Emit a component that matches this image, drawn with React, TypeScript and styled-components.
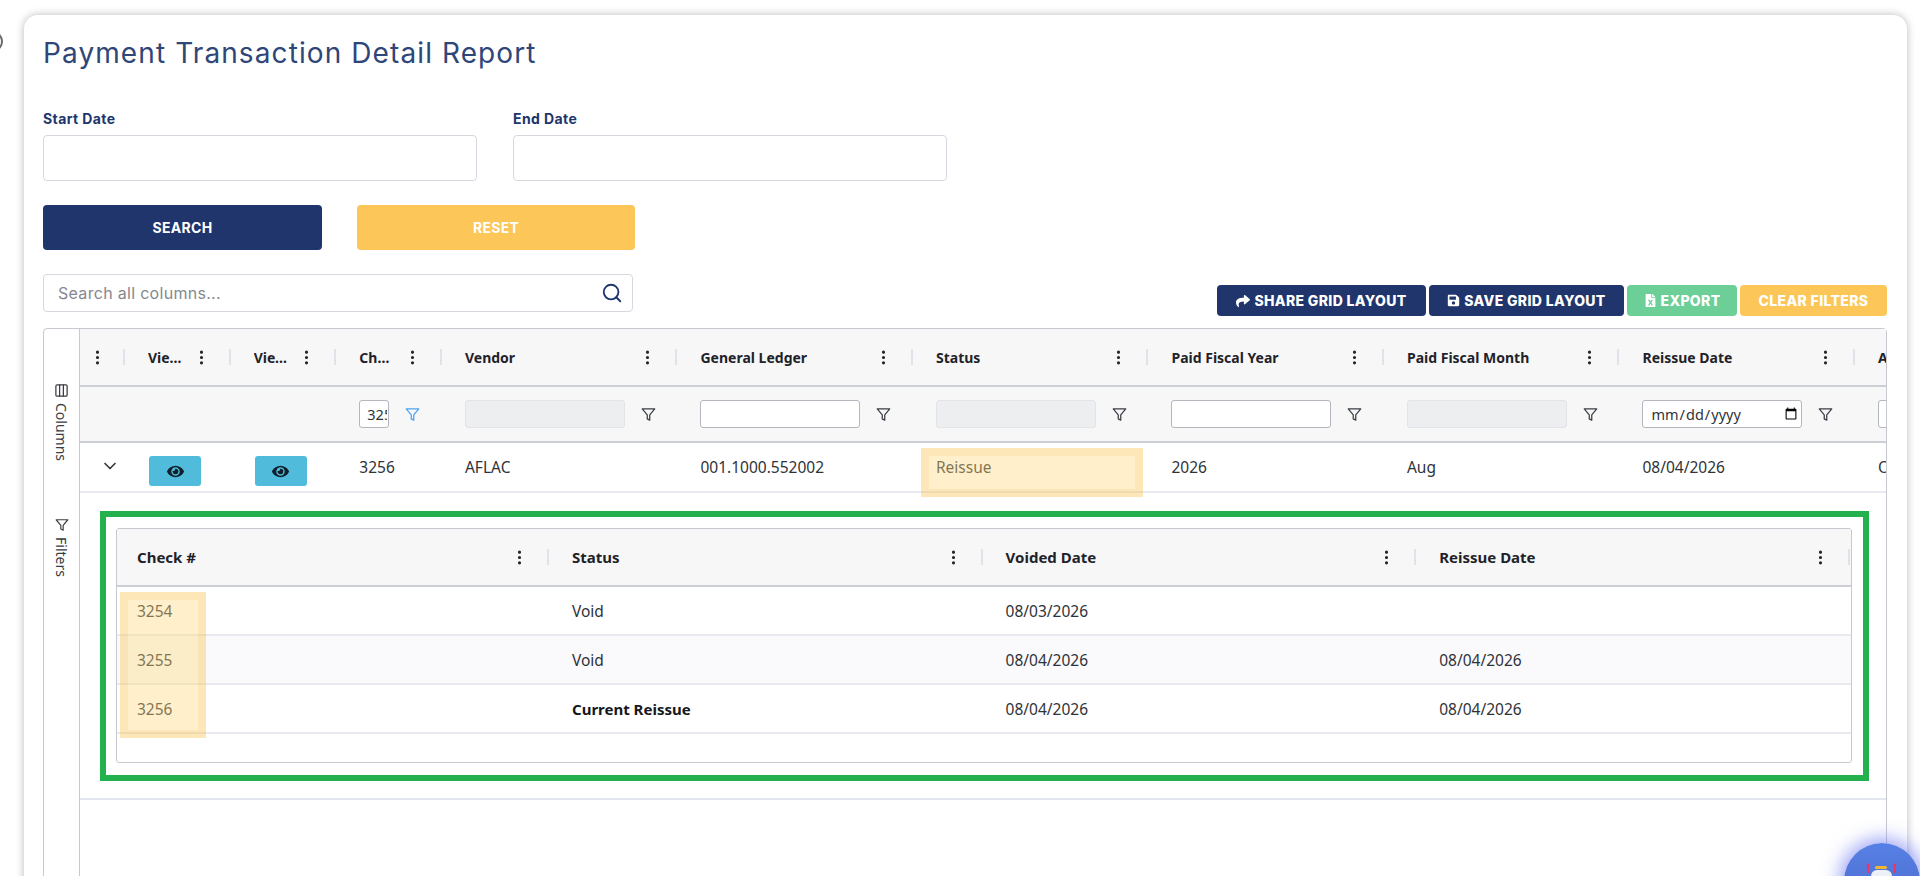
import React from "react";
import styled, { createGlobalStyle } from "styled-components";
import { BsThreeDotsVertical } from "react-icons/bs";
import { FaEye, FaFileExcel, FaSave, FaShare } from "react-icons/fa";
import { FiChevronDown, FiFilter, FiSearch } from "react-icons/fi";
import { Columns3 } from "lucide-react";

const Global = createGlobalStyle`
  html, body { margin: 0; padding: 0; height: 876px; overflow: hidden; background: #fff; }
  * { box-sizing: border-box; }
`;

const navy = "#20356b";
const yellow = "#fcc659";
const uiFont = `"Inter", "Liberation Sans", sans-serif`;
const gridFont = `"Noto Sans", "Open Sans", sans-serif`;

const Page = styled.div`
  position: relative;
  height: 876px;
  overflow: hidden;
  padding: 15px 13px 0 24px;
`;
const EdgeMark = styled.div`
  position: absolute;
  left: -14px;
  top: 32px;
  width: 17px;
  height: 19px;
  border-radius: 50%;
  border: 2px solid #6a6a6a;
`;
const Card = styled.main`
  height: 1000px;
  background: #fff;
  border-radius: 14px;
  box-shadow: 0 0 8px rgba(0, 0, 0, 0.28);
  padding: 21px 20px 0 19px;
`;
const Title = styled.h1`
  margin: 0 0 40px;
  font: 400 28px/34px ${uiFont};
  color: #2f4679;
  letter-spacing: 1.1px;
`;
const DateRow = styled.div`
  display: grid;
  grid-template-columns: 434px 434px;
  column-gap: 36px;
`;
const Field = styled.label`
  display: flex;
  flex-direction: column;
  gap: 7px;
`;
const FieldLabel = styled.span`
  font: 700 14px/18px ${uiFont};
  letter-spacing: 0.4px;
  color: ${navy};
`;
const TextBox = styled.input`
  height: 46px;
  border: 1px solid #d5d8de;
  border-radius: 4px;
  background: #fff;
`;
const Actions = styled.div`
  display: flex;
  gap: 35px;
  margin: 24px 0;
`;
const ActionButton = styled.button<{ $bg: string; $w: number }>`
  width: ${(p) => p.$w}px;
  height: 45px;
  border: 0;
  border-radius: 4px;
  background: ${(p) => p.$bg};
  color: #fff;
  font: 700 14px ${uiFont};
  letter-spacing: 0.3px;
`;
const ToolRow = styled.div`
  display: flex;
  justify-content: space-between;
  align-items: flex-end;
  height: 42px;
  margin-bottom: 12px;
`;
const SearchWrap = styled.div`
  align-self: flex-start;
  width: 590px;
  height: 38px;
  display: flex;
  align-items: center;
  justify-content: space-between;
  padding: 0 9px 0 14px;
  border: 1px solid #d5d8de;
  border-radius: 4px;
  font: 400 16px ${uiFont};
  letter-spacing: 0.3px;
  color: #85888f;
  svg { color: ${navy}; }
`;
const Toolbar = styled.div`
  display: flex;
  gap: 3px;
`;
const ToolButton = styled.button<{ $bg: string; $w: number }>`
  width: ${(p) => p.$w}px;
  height: 31px;
  display: flex;
  align-items: center;
  justify-content: center;
  gap: 4px;
  padding: 0;
  border: 0;
  border-radius: 4px;
  background: ${(p) => p.$bg};
  color: #fff;
  font: 800 14px ${uiFont};
  letter-spacing: 0.35px;
`;
const Grid = styled.section`
  display: flex;
  height: 800px;
  border: 1px solid #c6c9d0;
  border-radius: 4px;
  font: 400 15.5px ${gridFont};
  color: #2f3338;
`;
const Side = styled.aside`
  width: 36px;
  flex: none;
  display: flex;
  flex-direction: column;
  align-items: center;
  padding-top: 54px;
  gap: 57px;
  border-right: 1px solid #c6c9d0;
`;
const SideButton = styled.div`
  display: flex;
  flex-direction: column;
  align-items: center;
  gap: 5px;
  color: #3a3e44;
  font-size: 14px;
  span { writing-mode: vertical-lr; }
`;
const Main = styled.div`
  flex: 1;
  min-width: 0;
  overflow: hidden;
`;
const columns = "45px 105.67px 105.67px 105.67px repeat(7, 235.5px)";
const HeadRow = styled.div`
  display: grid;
  grid-template-columns: ${columns};
  width: max-content;
  height: 58px;
  background: #f7f7f8;
  border-bottom: 2px solid #ccd0d6;
`;
const HeadCell = styled.div<{ $left?: number }>`
  position: relative;
  display: flex;
  align-items: center;
  justify-content: space-between;
  min-width: 0;
  padding: 0 27px 0 ${(p) => p.$left ?? 23}px;
  font-weight: 700;
  font-size: 14px;
  color: #1f2329;
  &::after {
    content: "";
    position: absolute;
    right: 0;
    top: 20px;
    width: 2px;
    height: 16px;
    background: #e0e3ea;
  }
`;
const HeadLabel = styled.span`
  flex: 0 1 38px;
  min-width: 0;
  overflow: hidden;
  white-space: nowrap;
  text-overflow: ellipsis;
`;
const WideLabel = styled.span`
  white-space: nowrap;
`;
const Dots = styled(BsThreeDotsVertical)`
  flex: none;
  margin-right: -6px;
  width: 17px;
  height: 17px;
  color: #23272c;
`;
const FilterRow = styled.div`
  display: grid;
  grid-template-columns: ${columns};
  width: max-content;
  height: 56px;
  background: #f7f7f8;
  border-bottom: 2px solid #ccd0d6;
`;
const FilterCell = styled.div`
  display: flex;
  align-items: center;
  gap: 16px;
  padding-left: 23px;
  min-width: 0;
`;
const FilterInput = styled.input<{ $w?: number }>`
  flex: none;
  width: ${(p) => p.$w ?? 160}px;
  height: 28px;
  padding: 0 1px 0 7px;
  border: 1px solid ${(p) => (p.disabled ? "#e2e4e8" : "#b3b6bd")};
  border-radius: 3px;
  background: ${(p) => (p.disabled ? "#edeef0" : "#fff")};
  font: 400 14.5px ${gridFont};
  color: #2f3338;
`;
const FilterIcon = styled(FiFilter)<{ $active?: boolean }>`
  flex: none;
  width: 15px;
  height: 15px;
  color: ${(p) => (p.$active ? "#4aa3f0" : "#3a3e44")};
`;
const DataRow = styled.div`
  display: grid;
  grid-template-columns: ${columns};
  width: max-content;
  height: 50px;
  border-bottom: 2px solid #e8eaf0;
`;
const DataCell = styled.div`
  position: relative;
  display: flex;
  align-items: center;
  padding-left: 23px;
  white-space: nowrap;
`;
const ChevronCell = styled.div`
  display: flex;
  align-items: center;
  justify-content: center;
  padding-left: 15px;
  padding-bottom: 2px;
  color: #33373d;
`;
const ViewButton = styled.button`
  width: 52px;
  height: 30px;
  margin: 13px 0 0 1px;
  align-self: flex-start;
  display: flex;
  align-items: center;
  justify-content: center;
  padding: 0;
  border: 0;
  border-radius: 3px;
  background: #50bbdb;
  color: #10202b;
`;
const Highlight = styled.div`
  position: absolute;
  border: 8px solid rgba(250, 192, 77, 0.4);
  background: rgba(255, 217, 125, 0.4);
  background-clip: padding-box;
  pointer-events: none;
`;
const StatusMark = styled(Highlight)`
  left: 8px;
  top: 5px;
  width: 222px;
  height: 49px;
`;
const CheckMark = styled(Highlight)`
  left: 3px;
  top: 5px;
  width: 86px;
  height: 146px;
`;
const DetailRow = styled.div`
  padding: 18px 17px 17px 20px;
  border-bottom: 2px solid #e3e6ee;
`;
const GreenFrame = styled.div`
  height: 270px;
  padding: 11px 11px 0 10px;
  border: 6px solid #22b14c;
`;
const SubGrid = styled.div`
  height: 235px;
  overflow: hidden;
  border: 1px solid #c6c9d0;
  border-radius: 3px;
`;
const subColumns = "432px repeat(3, 433.6px)";
const SubHead = styled.div`
  display: grid;
  grid-template-columns: ${subColumns};
  height: 58px;
  background: #f7f7f8;
  border-bottom: 2px solid #ccd0d6;
`;
const SubHeadCell = styled.div`
  position: relative;
  display: flex;
  align-items: center;
  justify-content: space-between;
  padding: 0 27px 0 23px;
  font-weight: 700;
  font-size: 15px;
  color: #1f2329;
  &:first-child { padding-left: 20px; }
  &::after {
    content: "";
    position: absolute;
    right: 0;
    top: 20px;
    width: 2px;
    height: 16px;
    background: #e0e3ea;
  }
`;
const SubBody = styled.div`
  position: relative;
`;
const SubRow = styled.div<{ $alt?: boolean }>`
  display: grid;
  grid-template-columns: ${subColumns};
  height: 49px;
  background: ${(p) => (p.$alt ? "#fafafc" : "#fff")};
  border-bottom: 2px solid #e8eaf0;
`;
const SubCell = styled.div<{ $bold?: boolean }>`
  display: flex;
  align-items: center;
  padding-left: 23px;
  font-weight: ${(p) => (p.$bold ? 700 : 400)};
  font-size: ${(p) => (p.$bold ? "15px" : "inherit")};
  color: ${(p) => (p.$bold ? "#15181c" : "inherit")};
  &:first-child { padding-left: 20px; }
`;
const Fab = styled.div`
  position: fixed;
  left: 1844px;
  top: 843px;
  width: 76px;
  height: 76px;
  border-radius: 50%;
  background: linear-gradient(180deg, #5780e6, #4a68c6);
  box-shadow: 0 0 18px 5px rgba(98, 110, 240, 0.6);
  overflow: hidden;
`;

const fiscal = ["Vendor", "General Ledger", "Status", "Paid Fiscal Year", "Paid Fiscal Month", "Reissue Date", "Amount"];
const subRows = [
  { check: "3254", status: "Void", voided: "08/03/2026", reissue: "" },
  { check: "3255", status: "Void", voided: "08/04/2026", reissue: "08/04/2026", alt: true },
  { check: "3256", status: "Current Reissue", voided: "08/04/2026", reissue: "08/04/2026", bold: true },
];

export default function App() {
  return (
    <Page>
      <Global />
      <EdgeMark />
      <Card>
        <Title>Payment Transaction Detail Report</Title>
        <DateRow>
          <Field>
            <FieldLabel>Start Date</FieldLabel>
            <TextBox />
          </Field>
          <Field>
            <FieldLabel>End Date</FieldLabel>
            <TextBox />
          </Field>
        </DateRow>
        <Actions>
          <ActionButton $bg={navy} $w={279}>SEARCH</ActionButton>
          <ActionButton $bg={yellow} $w={278}>RESET</ActionButton>
        </Actions>
        <ToolRow>
          <SearchWrap>
            Search all columns...
            <FiSearch size={22} />
          </SearchWrap>
          <Toolbar>
            <ToolButton $bg={navy} $w={209}><FaShare size={14} />SHARE GRID LAYOUT</ToolButton>
            <ToolButton $bg={navy} $w={195}><FaSave size={13} />SAVE GRID LAYOUT</ToolButton>
            <ToolButton $bg="#6ccf97" $w={110}><FaFileExcel size={13} />EXPORT</ToolButton>
            <ToolButton $bg={yellow} $w={147}>CLEAR FILTERS</ToolButton>
          </Toolbar>
        </ToolRow>
        <Grid>
          <Side>
            <SideButton><Columns3 size={15} /><span>Columns</span></SideButton>
            <SideButton><FiFilter size={14} /><span>Filters</span></SideButton>
          </Side>
          <Main>
            <HeadRow>
              <HeadCell $left={9}><Dots /></HeadCell>
              <HeadCell><HeadLabel>View Details</HeadLabel><Dots /></HeadCell>
              <HeadCell><HeadLabel>View History</HeadLabel><Dots /></HeadCell>
              <HeadCell><HeadLabel>Check #</HeadLabel><Dots /></HeadCell>
              {fiscal.map((name) => (
                <HeadCell key={name}><WideLabel>{name}</WideLabel><Dots /></HeadCell>
              ))}
            </HeadRow>
            <FilterRow>
              <div />
              <div />
              <div />
              <FilterCell>
                <FilterInput $w={30} defaultValue="3256" />
                <FilterIcon $active />
              </FilterCell>
              <FilterCell><FilterInput disabled /><FilterIcon /></FilterCell>
              <FilterCell><FilterInput /><FilterIcon /></FilterCell>
              <FilterCell><FilterInput disabled /><FilterIcon /></FilterCell>
              <FilterCell><FilterInput /><FilterIcon /></FilterCell>
              <FilterCell><FilterInput disabled /><FilterIcon /></FilterCell>
              <FilterCell><FilterInput type="date" /><FilterIcon /></FilterCell>
              <FilterCell><FilterInput /><FilterIcon /></FilterCell>
            </FilterRow>
            <DataRow>
              <ChevronCell><FiChevronDown size={20} /></ChevronCell>
              <DataCell><ViewButton><FaEye size={17} /></ViewButton></DataCell>
              <DataCell><ViewButton><FaEye size={17} /></ViewButton></DataCell>
              <DataCell>3256</DataCell>
              <DataCell>AFLAC</DataCell>
              <DataCell>001.1000.552002</DataCell>
              <DataCell>Reissue<StatusMark /></DataCell>
              <DataCell>2026</DataCell>
              <DataCell>Aug</DataCell>
              <DataCell>08/04/2026</DataCell>
              <DataCell>O</DataCell>
            </DataRow>
            <DetailRow>
              <GreenFrame>
                <SubGrid>
                  <SubHead>
                    {["Check #", "Status", "Voided Date", "Reissue Date"].map((name) => (
                      <SubHeadCell key={name}><WideLabel>{name}</WideLabel><Dots /></SubHeadCell>
                    ))}
                  </SubHead>
                  <SubBody>
                    {subRows.map((r) => (
                      <SubRow key={r.check} $alt={r.alt}>
                        <SubCell>{r.check}</SubCell>
                        <SubCell $bold={r.bold}>{r.status}</SubCell>
                        <SubCell>{r.voided}</SubCell>
                        <SubCell>{r.reissue}</SubCell>
                      </SubRow>
                    ))}
                    <CheckMark />
                  </SubBody>
                </SubGrid>
              </GreenFrame>
            </DetailRow>
          </Main>
        </Grid>
      </Card>
      <Fab>
        <svg width="76" height="76" viewBox="0 0 76 76">
          <rect x="31" y="23" width="12" height="3" rx="1.5" fill="#f2b632" />
          <rect x="23.5" y="22" width="1.5" height="8" fill="#e8336b" />
          <rect x="50" y="22" width="1.5" height="8" fill="#e8336b" />
          <circle cx="24.2" cy="22" r="1.6" fill="#e8336b" />
          <circle cx="50.8" cy="22" r="1.6" fill="#e8336b" />
          <rect x="27" y="27" width="21" height="14" rx="6" fill="#eef0f6" />
        </svg>
      </Fab>
    </Page>
  );
}
